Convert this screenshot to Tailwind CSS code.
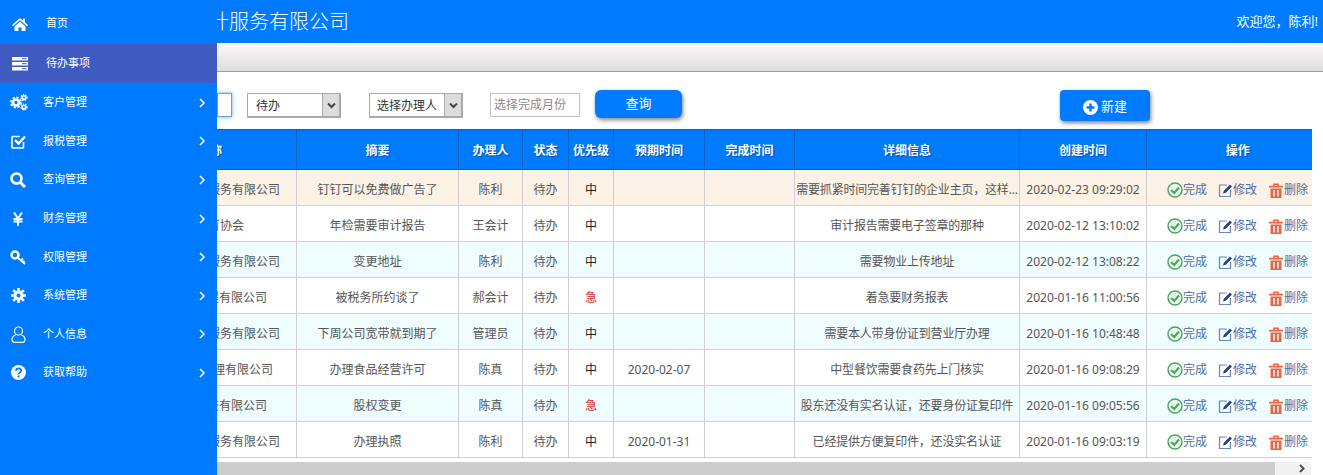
<!DOCTYPE html>
<html lang="zh">
<head>
<meta charset="UTF-8">
<title>待办事项</title>
<script src="https://cdn.jsdelivr.net/npm/@tailwindcss/browser@4"></script>
</head>
<body class="font-['Noto_Sans','Noto_Sans_CJK_SC',sans-serif] text-[12px] text-[#555] bg-white overflow-hidden">
<div class="relative w-[1323px] h-[475px] overflow-hidden">

    <!-- top bar -->
    <div class="h-[43px] bg-[#007bff] flex items-center justify-between pl-[209px] pr-[5px] text-white">
        <div class="text-[20px] font-light">计服务有限公司</div>
        <div class="text-[13px]">欢迎您，陈利!</div>
    </div>
    <div class="h-[29px] bg-gradient-to-b from-[#fbf9f9] to-[#dedcdc] border-b border-[#6aa9ea]"></div>

    <!-- toolbar -->
    <div class="h-[57px] flex items-start pt-[18px] pl-[217px] text-[#333]">
        <div class="w-[15px] h-[24px] mt-[3px] bg-white border border-[#6a9fdc] shadow-[0_0_4px_rgba(60,130,220,0.7)]"></div>
        <div class="ml-[15px] mt-[3px] w-[94px] h-[25px] flex border border-[#a9a9a9] border-r-2 border-b-2 bg-white">
            <div class="flex-1 pl-[8px] leading-[23px]">待办</div>
            <div class="w-[17px] bg-[#dcdcdc] border-l border-[#a9a9a9] flex items-center justify-center">
                <svg width="9" height="7" viewBox="0 0 9 7"><path d="M1 1.500l3.500 3.500 3.500-3.500" fill="none" stroke="#444" stroke-width="2"/></svg>
            </div>
        </div>
        <div class="ml-[28px] mt-[3px] w-[94px] h-[25px] flex border border-[#a9a9a9] border-r-2 border-b-2 bg-white">
            <div class="flex-1 pl-[7px] leading-[23px]">选择办理人</div>
            <div class="w-[17px] bg-[#dcdcdc] border-l border-[#a9a9a9] flex items-center justify-center">
                <svg width="9" height="7" viewBox="0 0 9 7"><path d="M1 1.500l3.500 3.500 3.500-3.500" fill="none" stroke="#444" stroke-width="2"/></svg>
            </div>
        </div>
        <div class="ml-[27px] mt-[3px] w-[90px] h-[24px] border border-[#c4c4c4] pl-[3px] leading-[22px] text-[#8a8a8a]">选择完成月份</div>
        <div class="ml-[15px] w-[87px] h-[28px] rounded-[6px] bg-[#007bff] text-white text-[13px] text-center leading-[26px] shadow-[1px_2px_4px_rgba(0,0,0,0.5)]">查询</div>
        <div class="ml-[378px] w-[90px] h-[31px] pt-[3px] rounded-[4px] bg-[#007bff] text-white text-[13px] flex items-center justify-center gap-[3px] shadow-[1px_2px_4px_rgba(0,0,0,0.5)]">
            <svg width="15" height="15" viewBox="0 0 15 15"><circle cx="7.500" cy="7.500" r="7.500" fill="#fff"/><path d="M7.500 3.500v8M3.500 7.500h8" stroke="#007bff" stroke-width="2.400"/></svg>
            <span>新建</span>
        </div>
    </div>

    <!-- table -->
    <table class="table-fixed border-collapse w-[1311px] text-center">
        <colgroup>
            <col class="w-[296px]"><col class="w-[162px]"><col class="w-[64px]"><col class="w-[46px]"><col class="w-[45px]"><col class="w-[91px]"><col class="w-[90px]"><col class="w-[225px]"><col class="w-[127px]"><col class="w-[165px]">
        </colgroup>
        <thead>
            <tr class="h-[40px] bg-[#007bff] text-white font-bold [&>th]:border [&>th]:border-[#0a62c0] [&>th]:pt-[2px] [&>th:last-child]:border-r-0 [text-shadow:1px_1px_1px_rgba(0,0,0,0.35)]">
                <th class="text-right pr-[74px]">客户名称</th><th>摘要</th><th>办理人</th><th>状态</th><th>优先级</th><th>预期时间</th><th>完成时间</th><th>详细信息</th><th>创建时间</th><th class="pl-[17px]">操作</th>
            </tr>
        </thead>
        <tbody id="rows" class="[&_td]:border [&_td]:border-[#d0d0d0] [&_td]:pt-[5px] [&_td:last-child]:border-r-0 [&_tr]:h-[36px]"></tbody>
    </table>

    <!-- horizontal scrollbar -->
    <div class="mt-[4px] h-[13px] w-[1311px] flex bg-[#f1f1f1]">
        <div class="w-[1275px] bg-[#cdcdcd]"></div>
        <div class="flex-1 flex items-center justify-end pr-[5px]">
            <svg width="7" height="9" viewBox="0 0 7 9"><path d="M1 1l3.500 3.500L1 8" fill="none" stroke="#505050" stroke-width="2"/></svg>
        </div>
    </div>

    <!-- side menu lies over the page -->
    <div class="absolute left-0 top-0 w-[217px] h-[475px] bg-[#007bff] text-white text-[11px]">
        <div class="h-[44px] pt-[3px] flex items-center">
            <svg class="ml-[12px]" width="16" height="14" viewBox="0 0 16 14"><path d="M8 1L0 8l1 1.200L8 3.200l7 6L16 8l-3-2.600V1.500h-2v2.200zM2.500 9.500V14h4v-3.500h3V14h4V9.500L8 4.800z" fill="#fff"/></svg>
            <span class="ml-[18px]">首页</span>
        </div>
        <div class="h-[39px] flex items-center bg-[#3f5bc2]">
            <svg class="ml-[12px]" width="16" height="14" viewBox="0 0 16 14"><path d="M0 0h16v3.500H0zM0 5h16v3.500H0zM0 10h16v3.500H0z" fill="#fff"/><path d="M10 1.700h4.500M10 6.700h4.500M10 11.700h4.500" stroke="#3f5bc2"/></svg>
            <span class="ml-[18px]">待办事项</span>
        </div>
        <div class="h-[39px] flex items-center">
            <svg class="ml-[10px]" width="18" height="17" viewBox="0 0 18 17"><circle cx="6" cy="8.500" r="3" fill="none" stroke="#fff" stroke-width="2.600"/><circle cx="6" cy="8.500" r="5" fill="none" stroke="#fff" stroke-width="2" stroke-dasharray="2.200 1.700"/><circle cx="14" cy="3.500" r="1.800" fill="none" stroke="#fff" stroke-width="1.600"/><circle cx="14" cy="3.500" r="3" fill="none" stroke="#fff" stroke-width="1.200" stroke-dasharray="1.400 1.100"/><circle cx="14" cy="13" r="1.800" fill="none" stroke="#fff" stroke-width="1.600"/><circle cx="14" cy="13" r="3" fill="none" stroke="#fff" stroke-width="1.200" stroke-dasharray="1.400 1.100"/></svg>
            <span class="ml-[15px] flex-1">客户管理</span>
            <svg class="mr-[11px]" width="7" height="10" viewBox="0 0 7 10"><path d="M1 1l4 4-4 4" fill="none" stroke="#fff" stroke-width="1.500"/></svg>
        </div>
        <div class="h-[38px] flex items-center">
            <svg class="ml-[11px]" width="15" height="15" viewBox="0 0 15 15"><path d="M12.500 8v5.200a.8.8 0 0 1-.8.800H1.800a.8.8 0 0 1-.8-.800V3.300a.8.8 0 0 1 .8-.8h7" fill="none" stroke="#fff" stroke-width="1.600"/><path d="M4 6l3.500 3.500L14 2.500" fill="none" stroke="#fff" stroke-width="2.400"/></svg>
            <span class="ml-[17px] flex-1">报税管理</span>
            <svg class="mr-[11px]" width="7" height="10" viewBox="0 0 7 10"><path d="M1 1l4 4-4 4" fill="none" stroke="#fff" stroke-width="1.500"/></svg>
        </div>
        <div class="h-[39px] flex items-center">
            <svg class="ml-[10px]" width="16" height="16" viewBox="0 0 16 16"><circle cx="6.500" cy="6.500" r="5" fill="none" stroke="#fff" stroke-width="2.600"/><path d="M10.500 10.500L15 15" stroke="#fff" stroke-width="3"/></svg>
            <span class="ml-[17px] flex-1">查询管理</span>
            <svg class="mr-[11px]" width="7" height="10" viewBox="0 0 7 10"><path d="M1 1l4 4-4 4" fill="none" stroke="#fff" stroke-width="1.500"/></svg>
        </div>
        <div class="h-[39px] flex items-center">
            <svg class="ml-[13px]" width="10" height="14" viewBox="0 0 10 14"><path d="M1 0.500l4 6 4-6M0.500 7h9M0.500 9.500h9M5 6v8" fill="none" stroke="#fff" stroke-width="2"/></svg>
            <span class="ml-[20px] flex-1">财务管理</span>
            <svg class="mr-[11px]" width="7" height="10" viewBox="0 0 7 10"><path d="M1 1l4 4-4 4" fill="none" stroke="#fff" stroke-width="1.500"/></svg>
        </div>
        <div class="h-[38px] flex items-center">
            <svg class="ml-[10px]" width="16" height="15" viewBox="0 0 16 15"><circle cx="5" cy="5" r="3.500" fill="none" stroke="#fff" stroke-width="2.400"/><path d="M7.500 7.500L15 14M11 10.500l2-2M13 12.500l1.500-1.500" fill="none" stroke="#fff" stroke-width="1.800"/></svg>
            <span class="ml-[17px] flex-1">权限管理</span>
            <svg class="mr-[11px]" width="7" height="10" viewBox="0 0 7 10"><path d="M1 1l4 4-4 4" fill="none" stroke="#fff" stroke-width="1.500"/></svg>
        </div>
        <div class="h-[39px] flex items-center">
            <svg class="ml-[11px]" width="15" height="15" viewBox="0 0 15 15"><circle cx="7.500" cy="7.500" r="3.500" fill="none" stroke="#fff" stroke-width="3"/><path d="M7.500 0v3M7.500 12v3M0 7.500h3M12 7.500h3M2.200 2.200l2 2M10.800 10.800l2 2M12.800 2.200l-2 2M4.200 10.800l-2 2" stroke="#fff" stroke-width="2.600"/></svg>
            <span class="ml-[17px] flex-1">系统管理</span>
            <svg class="mr-[11px]" width="7" height="10" viewBox="0 0 7 10"><path d="M1 1l4 4-4 4" fill="none" stroke="#fff" stroke-width="1.500"/></svg>
        </div>
        <div class="h-[38px] flex items-center">
            <svg class="ml-[11px]" width="15" height="17" viewBox="0 0 15 17"><circle cx="7.500" cy="5" r="4" fill="none" stroke="#fff" stroke-width="1.200"/><path d="M4.500 9C2 10 1 12 1 13.500 1 15.500 2 16.300 3.500 16.300h8c1.500 0 2.500-.8 2.500-2.800 0-1.500-1-3.500-3.500-4.500" fill="none" stroke="#fff" stroke-width="1.200"/></svg>
            <span class="ml-[17px] flex-1">个人信息</span>
            <svg class="mr-[11px]" width="7" height="10" viewBox="0 0 7 10"><path d="M1 1l4 4-4 4" fill="none" stroke="#fff" stroke-width="1.500"/></svg>
        </div>
        <div class="h-[39px] flex items-center">
            <svg class="ml-[11px]" width="15" height="15" viewBox="0 0 15 15"><circle cx="7.500" cy="7.500" r="7.500" fill="#fff"/><path d="M5 5.800c0-3.200 5.200-3.200 5.200-.2 0 2-2.600 2-2.600 3.700" fill="none" stroke="#007bff" stroke-width="1.800"/><rect x="6.600" y="10.400" width="2" height="2" fill="#007bff"/></svg>
            <span class="ml-[17px] flex-1">获取帮助</span>
            <svg class="mr-[11px]" width="7" height="10" viewBox="0 0 7 10"><path d="M1 1l4 4-4 4" fill="none" stroke="#fff" stroke-width="1.500"/></svg>
        </div>
    </div>
</div>

<script>
    const rows = [
        { bg: 'bg-[#fcf3e6]', pad: 'pr-[16px]', company: '服务有限公司', title: '钉钉可以免费做广告了', owner: '陈利', level: '中', due: '', detail: '需要抓紧时间完善钉钉的企业主页，这样...', created: '2020-02-23 09:29:02' },
        { bg: 'bg-white', pad: 'pr-[52px]', company: '育协会', title: '年检需要审计报告', owner: '王会计', level: '中', due: '', detail: '审计报告需要电子签章的那种', created: '2020-02-12 13:10:02' },
        { bg: 'bg-[#effdff]', pad: 'pr-[16px]', company: '服务有限公司', title: '变更地址', owner: '陈利', level: '中', due: '', detail: '需要物业上传地址', created: '2020-02-12 13:08:22' },
        { bg: 'bg-white', pad: 'pr-[29px]', company: '程有限公司', title: '被税务所约谈了', owner: '郝会计', level: '急', due: '', detail: '着急要财务报表', created: '2020-01-16 11:00:56' },
        { bg: 'bg-[#effdff]', pad: 'pr-[16px]', company: '服务有限公司', title: '下周公司宽带就到期了', owner: '管理员', level: '中', due: '', detail: '需要本人带身份证到营业厅办理', created: '2020-01-16 10:48:48' },
        { bg: 'bg-white', pad: 'pr-[23px]', company: '理有限公司', title: '办理食品经营许可', owner: '陈真', level: '中', due: '2020-02-07', detail: '中型餐饮需要食药先上门核实', created: '2020-01-16 09:08:29' },
        { bg: 'bg-[#effdff]', pad: 'pr-[29px]', company: '技有限公司', title: '股权变更', owner: '陈真', level: '急', due: '', detail: '股东还没有实名认证，还要身份证复印件', created: '2020-01-16 09:05:56' },
        { bg: 'bg-white', pad: 'pr-[16px]', company: '服务有限公司', title: '办理执照', owner: '陈利', level: '中', due: '2020-01-31', detail: '已经提供方便复印件，还没实名认证', created: '2020-01-16 09:03:19' },
    ];

    const actions = `
        <div class="flex pl-[20px]">
            <span class="w-[51px] shrink-0 flex items-center"><svg width="16" height="16" viewBox="0 0 16 16"><circle cx="8" cy="8" r="7" fill="#eaf7ea" stroke="#4aa564" stroke-width="1.400"/><path d="M4.200 8l3 3 4.800-5.500" fill="none" stroke="#4aa564" stroke-width="2.200"/></svg><span class="text-[#4a6fa8]">完成</span></span>
            <span class="w-[51px] shrink-0 flex items-center"><svg width="15" height="15" viewBox="0 0 15 15"><path d="M9 2H1.500v11.500h11V7" fill="none" stroke="#6d86b8" stroke-width="1.200"/><path d="M5 10.500l.8-2.800L12 1.500l2 2-6.200 6.200z" fill="#2b3f8c"/></svg><span class="text-[#4a6fa8]">修改</span></span>
            <span class="w-[51px] shrink-0 flex items-center gap-[1px]"><svg width="14" height="15" viewBox="0 0 14 15"><path d="M0 2.800h14v1.800H0zM4.200 2.800V.6h5.600v2.200H8.300V2H5.700v.8zM1.500 5.500h11V15h-11zM4.300 7v6.500h1.500V7zM8.200 7v6.500h1.500V7z" fill="#ea6444" fill-rule="evenodd"/></svg><span class="text-[#4a6fa8]">删除</span></span>
        </div>`;

    document.getElementById('rows').innerHTML = rows.map((r) => `
        <tr class="${r.bg}">
            <td class="text-right ${r.pad}">${r.company}</td>
            <td>${r.title}</td>
            <td>${r.owner}</td>
            <td>待办</td>
            <td class="${r.level == '急' ? 'text-[#d9281e]' : 'text-[#222]'}">${r.level}</td>
            <td>${r.due}</td>
            <td></td>
            <td class="whitespace-nowrap overflow-hidden tracking-[-0.2px]">${r.detail}</td>
            <td>${r.created}</td>
            <td>${actions}</td>
        </tr>`).join('');
</script>
</body>
</html>
